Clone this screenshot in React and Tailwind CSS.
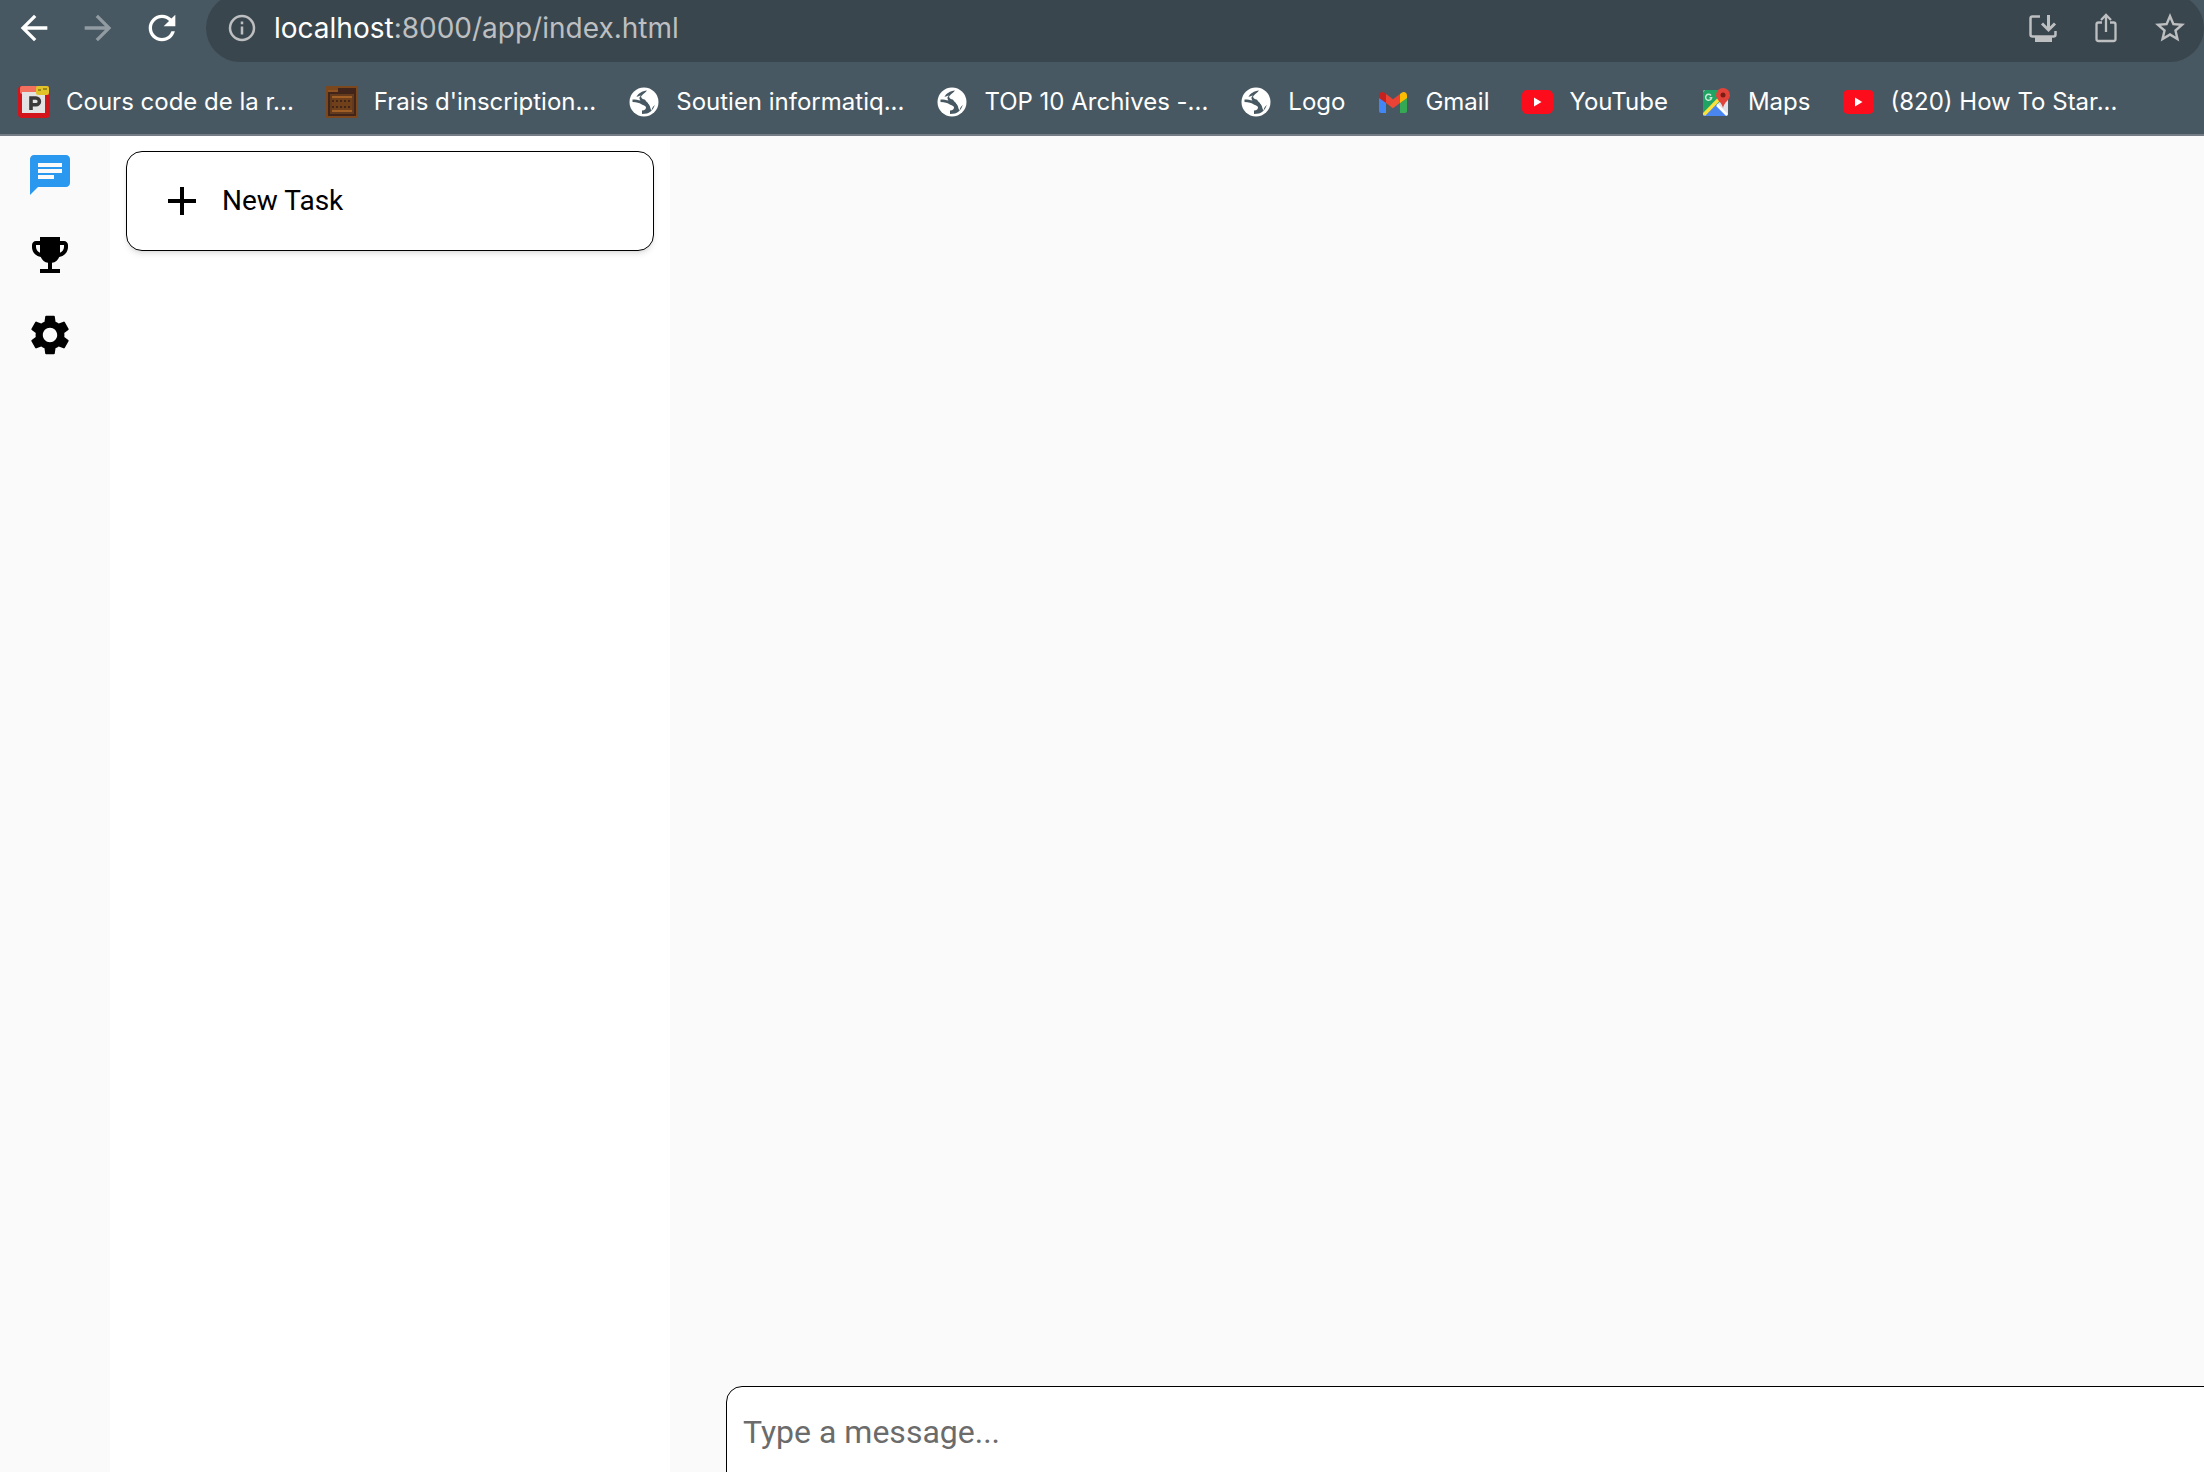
import { MdAdd, MdArrowBack, MdArrowForward, MdChat, MdEmojiEvents, MdRefresh, MdSettings, MdStarOutline } from 'react-icons/md';

function ParkingIcon() {
    return (
        <svg viewBox="0 0 16 16" className="w-8 h-8" aria-hidden="true">
            <rect width="16" height="16" rx="2" fill="#d3151b" />
            <rect x="1" width="13" height="4" rx="1" fill="#f4705e" />
            <rect x="2" y="3" width="11.500" height="10.500" fill="#e3e3e3" />
            <path d="M6.500 12V6h2.500a1.600 1.600 0 0 1 0 3.400h-2.500" fill="none" stroke="#3a3a3a" strokeWidth="1.800" />
            <rect x="9" width="6.500" height="4.500" rx="1" fill="#e0c42a" />
            <path d="M10 2h1.500M12.500 1.500h2" stroke="#8a7410" strokeWidth="0.800" />
        </svg>
    );
}

function CrateIcon() {
    return (
        <svg viewBox="0 0 16 16" className="w-8 h-8" aria-hidden="true">
            <rect width="16" height="16" fill="#7c471c" />
            <path d="M6 1h9v3H6zM1 3h14v12H1z" fill="#41251a" />
            <path d="M1 2h5v1H1z" fill="#8f5220" />
            <path d="M2 4h12v10H2z" fill="#633a1c" />
            <path d="M3 6h10v6H3z" fill="#6f4019" />
            <path d="M3 5h10v1H3zM3 12h10v1H3z" fill="#a15f26" />
            <path d="M3 7.500h10M3 10.500h10" stroke="#41251a" strokeDasharray="1 1" />
        </svg>
    );
}

function GlobeIcon() {
    return (
        <svg viewBox="0 0 32 32" className="w-8 h-8" aria-hidden="true">
            <circle cx="16" cy="16" r="14.500" fill="#fff" />
            <path d="M19 4.500c-5 .5-9 3-10.500 6.500 2-.5 3.500-1.500 5-1 1.500-2.500 4-3 5.500-5.500z" fill="#475862" />
            <path d="M13.500 9c-1 2.500.5 4 3 4.500 1.500.5 1.500 3 4 3.500 2 .3 3.500-.5 6.500-1.500.5 5-3 10.500-8 12l-5 .5v-3.500c3 0 4-1.500 4-3.500-1-2-3.500-1.500-5-3-1.500-1.500-4-1.500-8.500-2v-2.500c3 0 6 .5 8 1-1.500-2-1.500-4 1-5z" fill="#475862" />
            <path d="M20 10.500c2 2 5.500 2 8 4v4c-2.500 1-4 3-4.500 6-1.500-2-1-5-3.500-7z" fill="#fff" />
        </svg>
    );
}

function GmailIcon() {
    return (
        <svg viewBox="0 0 32 32" className="w-8 h-8" aria-hidden="true">
            <path d="M2 10l7 5v12H4a2 2 0 0 1-2-2z" fill="#4285f4" />
            <path d="M30 10l-7 5v12h5a2 2 0 0 0 2-2z" fill="#34a853" />
            <path d="M23 8l1.600-1.200C27 5 30 6.500 30 9.500V12l-7 5z" fill="#fbbc04" />
            <path d="M9 8L7.400 6.800C5 5 2 6.500 2 9.500V12l7 5z" fill="#c5221f" />
            <path d="M9 8l7 5.300L23 8v9l-7 5.300L9 17z" fill="#ea4335" />
        </svg>
    );
}

function YouTubeIcon() {
    return (
        <svg viewBox="0 0 32 32" className="w-8 h-8" aria-hidden="true">
            <rect x="1" y="4" width="31" height="24" rx="5" fill="#fd0d1b" />
            <path d="M13 11.500v9l7.500-4.500z" fill="#fff" />
        </svg>
    );
}

function MapsIcon() {
    return (
        <svg viewBox="0 0 32 32" className="w-8 h-8" aria-hidden="true">
            <rect x="3" y="4" width="25" height="26" rx="2" fill="#dfe3e8" />
            <path d="M5 4h16l2 9L5 29l-2-2V6z" fill="#1fa463" />
            <path d="M4 30l12-12 11 12z" fill="#4a86f0" />
            <path d="M4 28.500L22 10" stroke="#fbe13c" strokeWidth="3.500" />
            <path d="M17 19l10 10" stroke="#fff" strokeWidth="2.500" />
            <path d="M11 9.500a3 3 0 1 0 .6 2.300H9.500" fill="none" stroke="#c9ecd9" strokeWidth="1.500" />
            <path d="M23 22c-1-6-7-8-7-13a7 7 0 0 1 14 0c0 5-6 7-7 13z" fill="#e24339" />
            <circle cx="23" cy="9" r="2.500" fill="#7b1c15" />
        </svg>
    );
}

function InfoIcon() {
    return (
        <svg viewBox="0 0 28 28" fill="none" stroke="currentColor" strokeWidth="2.500" className="w-7 h-7" aria-hidden="true">
            <circle cx="14" cy="14" r="12" />
            <path d="M14 12.500v8M14 7.500v2.700" />
        </svg>
    );
}

function InstallIcon() {
    return (
        <svg viewBox="0 0 32 32" fill="none" stroke="currentColor" strokeWidth="2.500" className="w-8 h-8" aria-hidden="true">
            <path d="M12 4.500H4.500a2 2 0 0 0-2 2v16a2 2 0 0 0 2 2h21a2 2 0 0 0 2-2V19" />
            <path d="M20.500 3v14M14 11.500l6.500 6.500 6.500-6.500" strokeWidth="3" />
            <path d="M7 25h17v5H7z" fill="currentColor" stroke="none" />
        </svg>
    );
}

function ShareIcon() {
    return (
        <svg viewBox="0 0 32 32" fill="none" stroke="currentColor" strokeWidth="2.300" className="w-8 h-8" aria-hidden="true">
            <path d="M12 10.500H8.500a2 2 0 0 0-2 2V27a2 2 0 0 0 2 2h15a2 2 0 0 0 2-2V12.500a2 2 0 0 0-2-2H20" />
            <path d="M16 20V3M11 8l5-5 5 5" />
        </svg>
    );
}

const bookmarks = [
    { label: 'Cours code de la r...', Icon: ParkingIcon },
    { label: "Frais d'inscription...", Icon: CrateIcon },
    { label: 'Soutien informatiq...', Icon: GlobeIcon },
    { label: 'TOP 10 Archives -...', Icon: GlobeIcon },
    { label: 'Logo', Icon: GlobeIcon },
    { label: 'Gmail', Icon: GmailIcon },
    { label: 'YouTube', Icon: YouTubeIcon },
    { label: 'Maps', Icon: MapsIcon },
    { label: '(820) How To Star...', Icon: YouTubeIcon },
];

function BrowserBar() {
    return (
        <header className="shrink-0 overflow-hidden bg-[#475862] border-b-2 border-[#747d85] text-white font-[Inter,sans-serif]">
            <div className="flex items-center -mt-1.5 h-17 pl-3.5">
                <div className="flex items-center gap-6 w-48 shrink-0">
                    <button aria-label="Back"><MdArrowBack className="w-10 h-10" /></button>
                    <button aria-label="Forward" className="text-[#919ba1]"><MdArrowForward className="w-10 h-10" /></button>
                    <button aria-label="Reload"><MdRefresh className="w-10 h-10" /></button>
                </div>
                <div className="grow flex items-center h-full pl-5.5 pr-4 bg-[#3a464d] rounded-full text-[#bdbfc1]">
                    <InfoIcon />
                    <p className="grow ml-4.5 text-[28px]">
                        <span className="text-white">localhost</span>:8000/app/index.html
                    </p>
                    <div className="flex items-center gap-[30px]">
                        <button aria-label="Install app"><InstallIcon /></button>
                        <button aria-label="Share"><ShareIcon /></button>
                        <button aria-label="Bookmark this page"><MdStarOutline className="w-9 h-9" /></button>
                    </div>
                </div>
            </div>
            <nav className="flex items-center gap-8 h-18 pt-2 pl-4.5 whitespace-nowrap text-2xl">
                {bookmarks.map(({ label, Icon }) => (
                    <a key={label} href="#" className="flex items-center gap-4">
                        <Icon />
                        {label}
                    </a>
                ))}
            </nav>
        </header>
    );
}

export default function App() {
    return (
        <div className="h-screen flex flex-col overflow-hidden bg-[#fafafa] text-black antialiased font-[Roboto,sans-serif]">
            <BrowserBar />
            <div className="grow flex min-h-0">
                <nav className="w-[110px] shrink-0 flex flex-col gap-8 pt-[15px] pl-6.5">
                    <button aria-label="Chat" className="w-12 h-12 text-[#2b98f0]"><MdChat className="w-12 h-12" /></button>
                    <button aria-label="Achievements" className="w-12 h-12"><MdEmojiEvents className="w-12 h-12" /></button>
                    <button aria-label="Settings" className="w-12 h-12"><MdSettings className="w-12 h-12" /></button>
                </nav>
                <aside className="w-[560px] shrink-0 bg-white px-4 py-[15px]">
                    <button className="w-full h-25 flex items-center gap-4 px-[31px] bg-white border border-black rounded-2xl shadow-md text-[28px]">
                        <MdAdd className="w-12 h-12" />
                        New Task
                    </button>
                </aside>
                <main className="grow flex flex-col justify-end pl-14">
                    <input
                        type="text"
                        aria-label="Message"
                        placeholder="Type a message..."
                        className="h-27 -mb-5.5 -mr-4 px-4 pb-4 bg-white border border-black rounded-2xl text-[32px] placeholder:text-[#6b6b6b] outline-none"
                    />
                </main>
            </div>
        </div>
    );
}
